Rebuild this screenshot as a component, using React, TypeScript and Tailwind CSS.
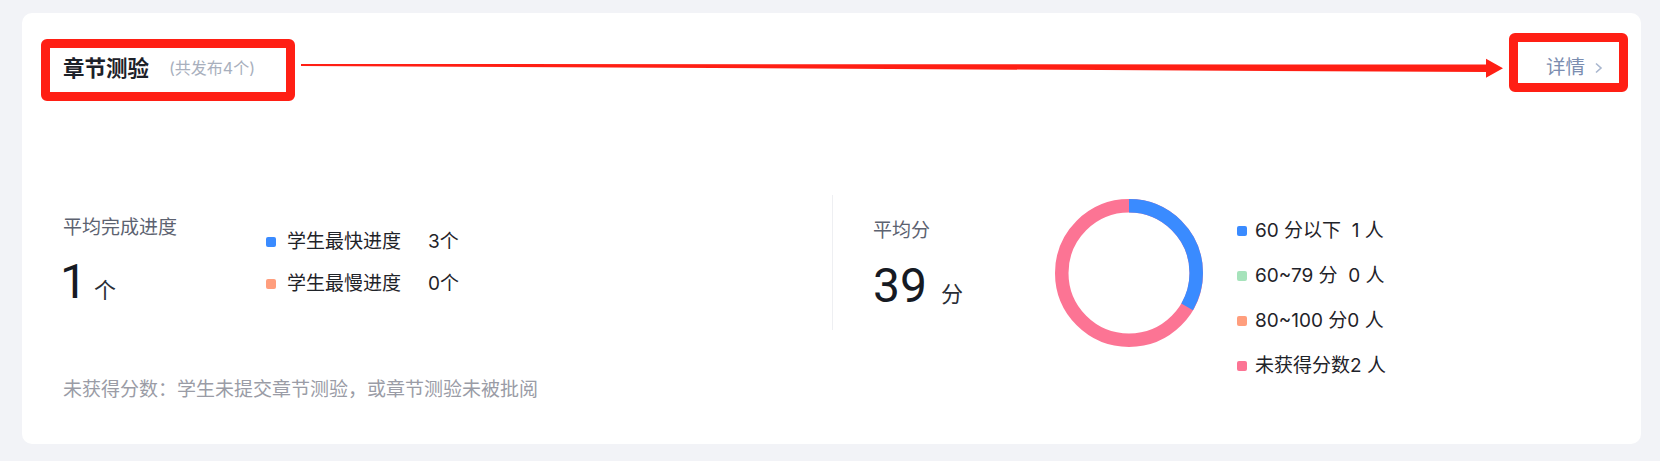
import React from 'react';

const FONT = { fontFamily: 'Inter, "Noto Sans CJK SC", sans-serif' };
const NUM_FONT = { fontFamily: 'Roboto, "Noto Sans CJK SC", sans-serif' };

const PROGRESS = [
  { label: '学生最快进度', value: '3个', color: 'bg-[#3a8bff]' },
  { label: '学生最慢进度', value: '0个', color: 'bg-[#ff9e7d]' },
];

const SCORE_LEGEND = [
  { text: '60 分以下  1 人', color: 'bg-[#3a8bff]' },
  { text: '60~79 分  0 人', color: 'bg-[#a6e3bb]' },
  { text: '80~100 分0 人', color: 'bg-[#ff9e7d]' },
  { text: '未获得分数2 人', color: 'bg-[#fc7494]' },
];

function Donut() {
  const r = 67.25;
  const c = 2 * Math.PI * r;
  const blue = c / 3; // 1 of 3 students below 60
  return (
    <svg width="148" height="148" viewBox="0 0 148 148">
      <circle cx="74" cy="74" r={r} fill="none" stroke="#fc7494" strokeWidth="13.5" />
      <circle
        cx="74"
        cy="74"
        r={r}
        fill="none"
        stroke="#3a8bff"
        strokeWidth="13.5"
        strokeDasharray={`${blue} ${c - blue}`}
        transform="rotate(-90 74 74)"
      />
    </svg>
  );
}

// red markup drawn over the screenshot
function Annotations() {
  return (
    <>
      <div className="pointer-events-none absolute left-[41px] top-[39px] h-[62px] w-[254px] rounded-[6px] border-[9px] border-[#ff1f14]" />
      <div className="pointer-events-none absolute left-[1509px] top-[33px] h-[59px] w-[119px] rounded-[6px] border-[9px] border-[#ff1f14]" />
      <svg className="pointer-events-none absolute left-0 top-0" width="1660" height="461">
        <polygon
          points="301,64 1486,64.5 1486,58.7 1503,68.3 1486,77.7 1486,72 301,66"
          fill="#ff1f14"
        />
      </svg>
    </>
  );
}

export default function App() {
  return (
    <div className="relative min-h-screen bg-[#f2f3f7] pl-[22px] pr-[19px] pt-[13px]" style={FONT}>
      <div className="h-[431px] rounded-[10px] bg-white px-[41px] pt-[40px]">
        {/* header */}
        <div className="flex h-[30px] items-center justify-between">
          <div className="flex items-center">
            <span className="text-[21.5px] font-bold text-[#1d2129]">章节测验</span>
            <span className="ml-5 text-[16px] text-[#a8afbd]">(共发布4个)</span>
          </div>
          <div className="-mr-[3px] flex items-center text-[19.5px] text-[#7b8db0]">
            <span>详情</span>
            <svg className="ml-[9px]" width="9" height="12" viewBox="0 0 9 12">
              <polyline points="2,1.5 7,6 2,10.5" fill="none" stroke="#a9b7cf" strokeWidth="1.6" />
            </svg>
          </div>
        </div>

        {/* stats */}
        <div className="mt-[112px] flex items-start">
          <div className="flex w-[769px] items-start">
            <div className="w-[203px] pt-[21px]">
              <div className="text-[19px] leading-6 text-[#5c6270]">平均完成进度</div>
              <div className="mt-[18px] -ml-[3px] flex items-baseline">
                <span className="text-[48px] leading-[48px] text-[#161a23]" style={NUM_FONT}>1</span>
                <span className="ml-[7px] text-[22px] text-[#2a2e36]">个</span>
              </div>
            </div>
            <div className="flex flex-col gap-[18px] pt-[35px]">
              {PROGRESS.map((p) => (
                <div key={p.label} className="flex h-6 items-center text-[19px] text-[#1f2329]">
                  <span className={`h-[10px] w-[10px] rounded-[2px] ${p.color}`} />
                  <span className="ml-[11px] w-[141px]">{p.label}</span>
                  <span>{p.value}</span>
                </div>
              ))}
            </div>
          </div>

          <div className="h-[135px] w-px bg-[#eeeff2]" />

          <div className="flex items-start pl-[40px]">
            <div className="w-[182px] pt-[24px]">
              <div className="text-[19px] leading-6 text-[#5c6270]">平均分</div>
              <div className="mt-[19px] flex items-baseline">
                <span className="text-[48px] leading-[48px] text-[#161a23]" style={NUM_FONT}>39</span>
                <span className="ml-[14px] text-[22px] text-[#2a2e36]">分</span>
              </div>
            </div>
            <div className="mt-[4px]">
              <Donut />
            </div>
            <div className="ml-[34px] flex flex-col gap-[21px] pt-[24px]">
              {SCORE_LEGEND.map((s) => (
                <div key={s.text} className="flex h-6 items-center text-[19px] text-[#1f2329]">
                  <span className={`h-[10px] w-[10px] rounded-[2px] ${s.color}`} />
                  <span className="ml-[8px] whitespace-pre">{s.text}</span>
                </div>
              ))}
            </div>
          </div>
        </div>

        <div className="text-[19px] leading-6 text-[#9a9ca6]">
          未获得分数：学生未提交章节测验，或章节测验未被批阅
        </div>
      </div>

      <Annotations />
    </div>
  );
}
